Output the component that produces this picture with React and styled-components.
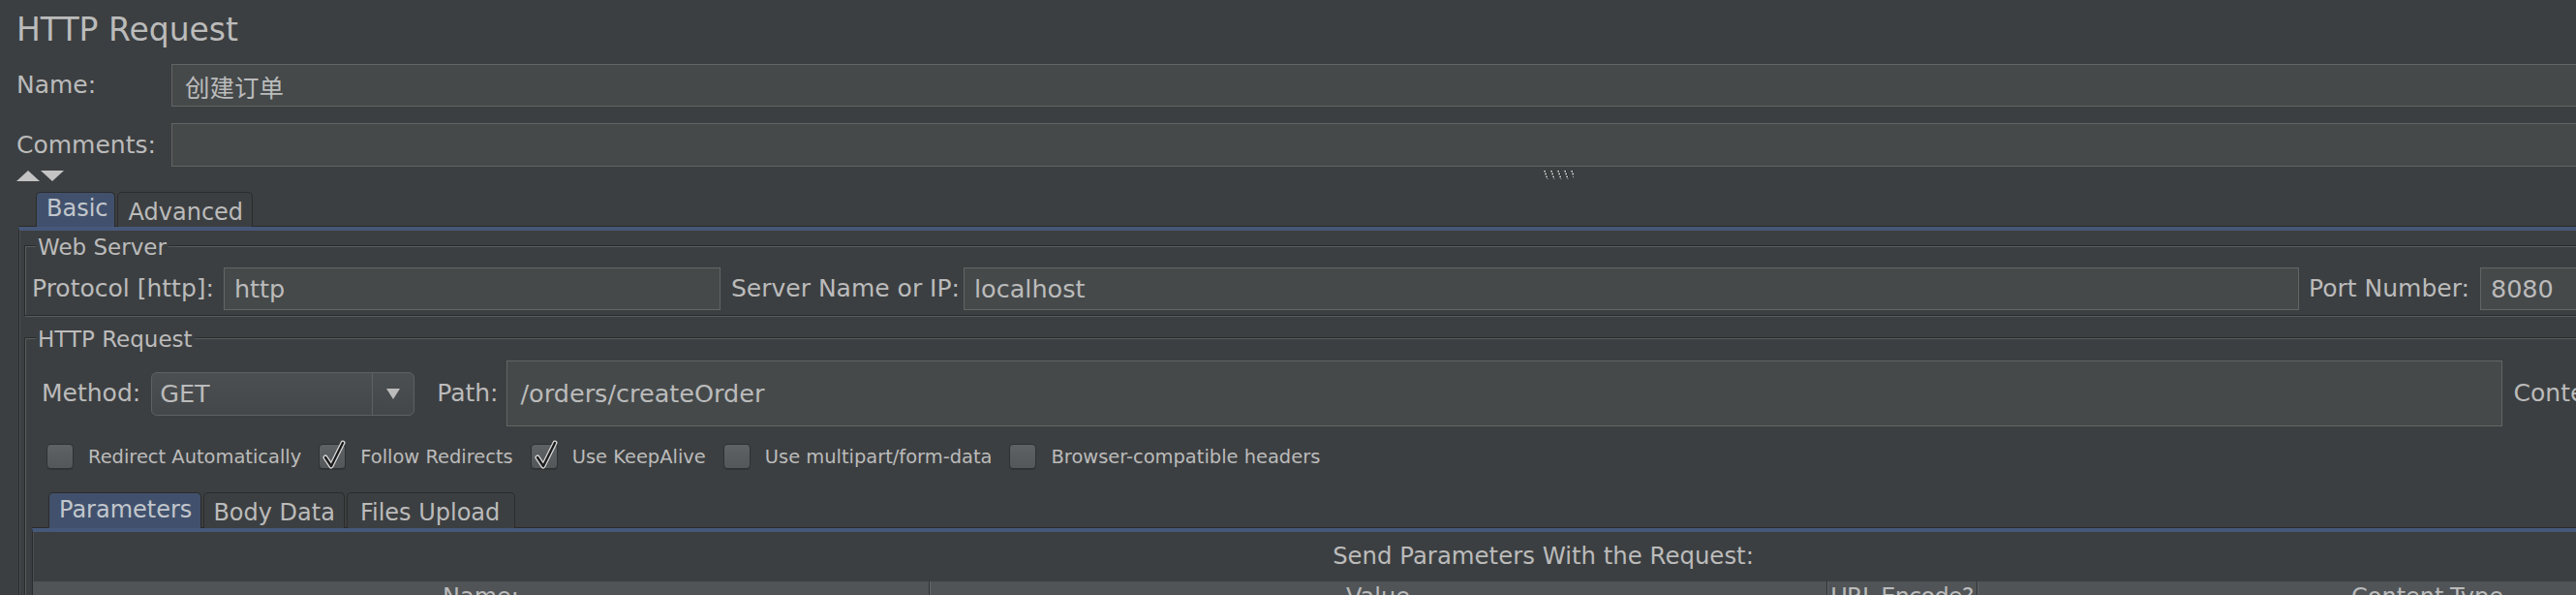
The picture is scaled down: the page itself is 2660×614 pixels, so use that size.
import React from 'react';
import styled, { createGlobalStyle } from 'styled-components';

const GlobalStyle = createGlobalStyle`
  html, body {
    margin: 0;
    padding: 0;
    background: #3c3f41;
    overflow: hidden;
  }
  body {
    font-family: "DejaVu Sans", "Noto Sans CJK SC", sans-serif;
    color: #bbbbbb;
  }
`;

const Page = styled.div`
  width: 3218px;
  height: 614px;
  box-sizing: border-box;
  padding: 11px 17px 0;
  overflow: hidden;
`;

const Title = styled.h1`
  margin: 0;
  height: 40px;
  font-size: 33px;
  font-weight: normal;
  line-height: 40px;
`;

const FieldRow = styled.div`
  display: grid;
  grid-template-columns: 160px 1fr;
  align-items: center;
  height: ${p => p.$h}px;
  margin-top: ${p => p.$top}px;
`;

const Label = styled.span`
  font-size: 25px;
  line-height: 30px;
  white-space: nowrap;
  margin: 0 ${p => p.$mr ?? 0}px 0 ${p => p.$ml ?? 0}px;
`;

const TextBox = styled.div`
  box-sizing: border-box;
  height: ${p => (p.$h ? `${p.$h}px` : '100%')};
  width: ${p => (p.$w ? `${p.$w}px` : 'auto')};
  flex: none;
  display: flex;
  align-items: center;
  padding-left: ${p => p.$pl ?? 11}px;
  background: #45494a;
  border: 1px solid #646464;
  font-size: 25.5px;
  color: #bbbbbb;
  white-space: nowrap;
  overflow: hidden;
`;

const SplitBar = styled.div`
  display: grid;
  grid-template-columns: 1fr auto 1fr;
  height: 26px;
  padding-top: 4px;
  box-sizing: border-box;
`;

const TabStrip = styled.div`
  display: flex;
  align-items: flex-end;
  gap: 2px;
  height: ${p => p.$h}px;
  margin: ${p => p.$top ?? 0}px 0 0 ${p => p.$ml}px;
`;

const Tab = styled.div`
  box-sizing: border-box;
  height: 100%;
  display: flex;
  align-items: flex-end;
  padding: 0 ${p => p.$pr ?? p.$px ?? 10}px ${p => (p.$active ? 4 : p.$pb ?? 0)}px ${p => p.$px ?? 10}px;
  border: 1px solid #2b2b2b;
  border-bottom: none;
  border-radius: 5px 5px 0 0;
  background: ${p => (p.$active ? '#41516d' : '#3c3f41')};
  font-size: 24px;
  line-height: 30px;
  color: ${p => (p.$active ? '#c2c6cc' : '#bbbbbb')};
  white-space: nowrap;
`;

const TabPanel = styled.div`
  margin-left: ${p => p.$ml ?? 0}px;
  border-top: 4px solid #46587a;
  border-left: 1px solid #2b2b2b;
  box-shadow: 0 -1px 0 #2b2b2b, inset 1px 0 0 #4b4e50;
  padding: ${p => p.$pad};
`;

const Group = styled.fieldset`
  margin: ${p => p.$top ?? 0}px 0 0;
  padding: ${p => p.$pad};
  border: 1px solid #2b2b2b;
  box-shadow: inset 1px 1px 0 #595c5e, 1px 1px 0 #595c5e;
  min-width: 0;
`;

const Legend = styled.legend`
  margin-left: 4px;
  padding: 4px 2px 0;
  font-size: 23px;
  line-height: 24px;
  background: #3c3f41;
`;

const Row = styled.div`
  display: flex;
  align-items: center;
  height: ${p => p.$h}px;
  margin-top: ${p => p.$top ?? 0}px;
  padding-left: ${p => p.$pl ?? 0}px;
`;

const Combo = styled.div`
  box-sizing: border-box;
  width: 272px;
  height: 45px;
  flex: none;
  display: flex;
  border: 1px solid #5e6163;
  border-radius: 6px;
  background: linear-gradient(#4b4f51, #434749);
  font-size: 25.5px;
`;

const ComboValue = styled.div`
  flex: 1;
  display: flex;
  align-items: center;
  padding-left: 8px;
`;

const ComboArrow = styled.div`
  width: 42px;
  display: flex;
  align-items: center;
  justify-content: center;
  border-left: 1px solid #5e6163;
`;

const CheckItem = styled.label`
  display: flex;
  align-items: center;
  margin-right: 18px;
  font-size: 19.45px;
  white-space: nowrap;
`;

const Box = styled.span`
  position: relative;
  box-sizing: border-box;
  width: 28px;
  height: 26px;
  margin-right: 15px;
  border: 1px solid #2e3032;
  border-radius: 4px;
  background: linear-gradient(#5f6264, #53575a);
  box-shadow: 0 1px 0 #323436;
`;

const Tick = styled.svg`
  position: absolute;
  left: 0;
  top: -4px;
  overflow: visible;
`;

const TableTitle = styled.div`
  height: 30px;
  font-size: 24.4px;
  line-height: 30px;
  text-align: center;
  padding-right: 40px;
`;

const HeaderRow = styled.div`
  display: grid;
  grid-template-columns: 925px 927px 155px 930px 1fr;
  height: 40px;
  margin-top: 11px;
  background: #505457;
`;

const HeaderCell = styled.div`
  padding-top: 1px;
  font-size: 24px;
  line-height: 30px;
  text-align: center;
  white-space: nowrap;
  letter-spacing: ${p => (p.$tight ? '-0.8px' : 'normal')};
  border-left: ${p => (p.$first ? 'none' : '1px solid #2f3133')};
  box-shadow: ${p => (p.$first ? 'none' : 'inset 1px 0 0 #63676a')};
`;

const Arrows = () => (
  <svg width="50" height="11" viewBox="0 0 50 11">
    <polygon points="0,11 12,0 24,11" fill="#c4c4c4" />
    <polygon points="25,0 49,0 37,11" fill="#c4c4c4" />
  </svg>
);

const Grip = () => (
  <svg width="32" height="9" viewBox="0 0 32 9">
    {[0, 1, 2, 3, 4].map(i => (
      <g key={i}>
        <line x1={i * 7 + 3} y1="0" x2={i * 7 + 6} y2="9" stroke="#1e1e1e" strokeWidth="1.4" strokeDasharray="1.5 1.5" />
        <line x1={i * 7 + 2} y1="0" x2={i * 7 + 5} y2="9" stroke="#f0f0f0" strokeWidth="1.4" strokeDasharray="1.5 1.5" />
      </g>
    ))}
  </svg>
);

const Check = ({ checked, children }) => (
  <CheckItem>
    <Box>
      {checked && (
        <Tick width="28" height="30" viewBox="0 0 28 30">
          <path d="M6 17 L12 26 L24 2" fill="none" stroke="#d8d8d8" strokeWidth="5" strokeLinejoin="round" strokeLinecap="round" />
          <path d="M6 17 L12 26 L24 2" fill="none" stroke="#1c1c1c" strokeWidth="2.4" strokeLinejoin="round" strokeLinecap="round" />
        </Tick>
      )}
    </Box>
    {children}
  </CheckItem>
);

export default function App() {
  return (
    <>
      <GlobalStyle />
      <Page>
        <Title>HTTP Request</Title>

        <FieldRow $h={44} $top={15}>
          <Label>Name:</Label>
          <TextBox $pl={13}>创建订单</TextBox>
        </FieldRow>
        <FieldRow $h={45} $top={17}>
          <Label>Comments:</Label>
          <TextBox />
        </FieldRow>

        <SplitBar>
          <Arrows />
          <Grip />
        </SplitBar>

        <TabStrip $h={36} $ml={20}>
          <Tab $active $px={10} $pr={6}>Basic</Tab>
          <Tab $px={11} $pr={9}>Advanced</Tab>
        </TabStrip>

        <TabPanel $ml={2} $pad="1px 0 0 5px">
          <Group $pad="9px 7px 5px">
            <Legend>Web Server</Legend>
            <Row $h={44}>
              <Label $mr={10}>Protocol [http]:</Label>
              <TextBox $w={513} $pl={10}>http</TextBox>
              <Label $ml={11} $mr={4}>Server Name or IP:</Label>
              <TextBox $w={1379} $pl={10}>localhost</TextBox>
              <Label $ml={10} $mr={11}>Port Number:</Label>
              <TextBox $w={250} $pl={10}>8080</TextBox>
            </Row>
          </Group>

          <Group $top={8} $pad="10px 7px 0">
            <Legend>HTTP Request</Legend>
            <Row $h={68} $pl={10}>
              <Label $mr={11}>Method:</Label>
              <Combo>
                <ComboValue>GET</ComboValue>
                <ComboArrow>
                  <svg width="14" height="11" viewBox="0 0 14 11">
                    <polygon points="0,0 14,0 7,11" fill="#bbbbbb" />
                  </svg>
                </ComboArrow>
              </Combo>
              <Label $ml={23} $mr={8}>Path:</Label>
              <TextBox $w={2061} $pl={14}>/orders/createOrder</TextBox>
              <Label $ml={12} $mr={11}>Content encoding:</Label>
              <TextBox $w={300} $h={44} />
            </Row>

            <Row $h={26} $top={18} $pl={15}>
              <Check>Redirect Automatically</Check>
              <Check checked>Follow Redirects</Check>
              <Check checked>Use KeepAlive</Check>
              <Check>Use multipart/form-data</Check>
              <Check>Browser-compatible headers</Check>
            </Row>

            <TabStrip $h={37} $top={24} $ml={17}>
              <Tab $active $px={10} $pr={9}>Parameters</Tab>
              <Tab $px={9} $pb={1}>Body Data</Tab>
              <Tab $px={13} $pr={15} $pb={1}>Files Upload</Tab>
            </TabStrip>

            <TabPanel $pad="10px 0 0">
              <TableTitle>Send Parameters With the Request:</TableTitle>
              <HeaderRow>
                <HeaderCell $first>Name:</HeaderCell>
                <HeaderCell>Value</HeaderCell>
                <HeaderCell $tight>URL Encode?</HeaderCell>
                <HeaderCell>Content-Type</HeaderCell>
                <HeaderCell />
              </HeaderRow>
            </TabPanel>
          </Group>
        </TabPanel>
      </Page>
    </>
  );
}
